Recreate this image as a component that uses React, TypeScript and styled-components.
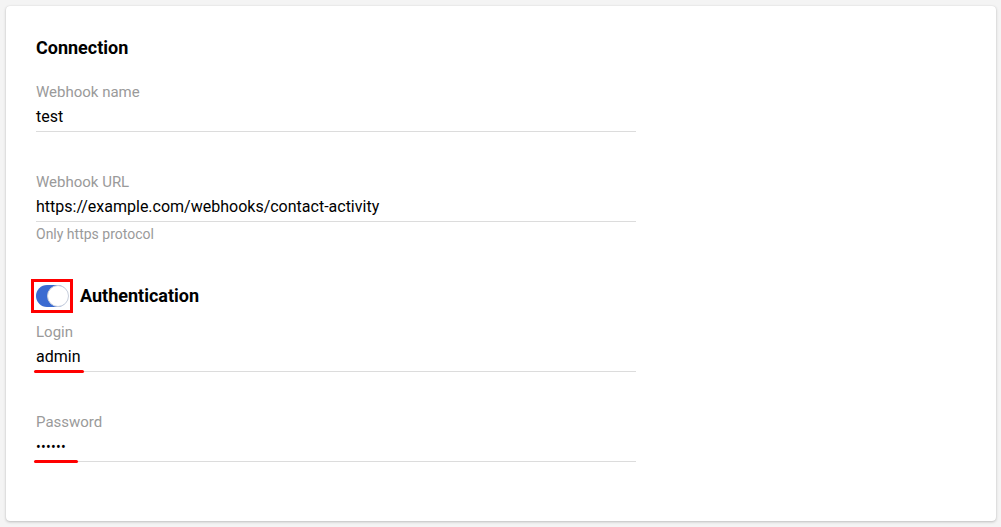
import React from "react";
import styled, { createGlobalStyle } from "styled-components";

const Global = createGlobalStyle`
  html, body { margin: 0; padding: 0; background: #f4f4f4; }
  body { font-family: Roboto, "Liberation Sans", Arial, sans-serif; }
  * { box-sizing: border-box; }
`;

const Page = styled.div`
  width: 1001px;
  height: 527px;
  padding: 6px 5px 6px 6px;
`;

const Card = styled.div`
  background: #fff;
  border-radius: 4px;
  box-shadow: 0 1px 3px rgba(0, 0, 0, 0.22), 0 0 1px rgba(0, 0, 0, 0.12);
  height: 515px;
  padding: 30px 30px;
  display: flex;
  flex-direction: column;
`;

const Heading = styled.h2`
  margin: 0;
  font-size: 18px;
  line-height: 24px;
  font-weight: 700;
  color: #000;
`;

const Field = styled.div<{ $top: number }>`
  position: relative;
  width: 600px;
  margin-top: ${(p) => p.$top}px;
`;

const Label = styled.div`
  font-size: 15px;
  line-height: 20px;
  color: #9a9a9a;
`;

const Value = styled.div<{ $dots?: boolean }>`
  font-size: ${(p) => (p.$dots ? "14px" : "16px")};
  line-height: 24px;
  color: #000;
  padding: 3px 0 2px;
  border-bottom: 1px solid #dcdcdc;
  letter-spacing: ${(p) => (p.$dots ? "0.3px" : "0")};
`;

const Helper = styled.div`
  font-size: 14px;
  line-height: 16px;
  color: #9a9a9a;
  margin-top: 4px;
`;

const Mark = styled.div<{ $w: number }>`
  position: absolute;
  left: -2px;
  bottom: -1px;
  width: ${(p) => p.$w}px;
  height: 3px;
  border-radius: 2px;
  background: #ff0000;
`;

const ToggleRow = styled.div`
  display: flex;
  align-items: center;
  gap: 7px;
  margin-top: 37px;
  margin-left: -5px;
`;

const Highlight = styled.div`
  border: 3px solid #ff0000;
  padding: 3px 2px;
  display: flex;
`;

const Track = styled.div`
  width: 32px;
  height: 22px;
  border-radius: 11px;
  background: #3b6bd1;
  position: relative;
`;

const Thumb = styled.div`
  position: absolute;
  right: -1px;
  top: 0;
  width: 22px;
  height: 22px;
  border-radius: 50%;
  background: #fff;
  border: 1px solid #c8cfdc;
`;

const SubHeading = styled.span`
  font-size: 18px;
  line-height: 24px;
  font-weight: 700;
  color: #000;
`;

export default function App() {
  return (
    <>
      <Global />
      <Page>
        <Card>
          <Heading>Connection</Heading>
          <Field $top={22}>
            <Label>Webhook name</Label>
            <Value>test</Value>
          </Field>
          <Field $top={40}>
            <Label>Webhook URL</Label>
            <Value>https://example.com/webhooks/contact-activity</Value>
            <Helper>Only https protocol</Helper>
          </Field>
          <ToggleRow>
            <Highlight>
              <Track>
                <Thumb />
              </Track>
            </Highlight>
            <SubHeading>Authentication</SubHeading>
          </ToggleRow>
          <Field $top={9}>
            <Label>Login</Label>
            <Value>admin</Value>
            <Mark $w={50} />
          </Field>
          <Field $top={40}>
            <Label>Password</Label>
            <Value $dots>••••••</Value>
            <Mark $w={44} />
          </Field>
        </Card>
      </Page>
    </>
  );
}
